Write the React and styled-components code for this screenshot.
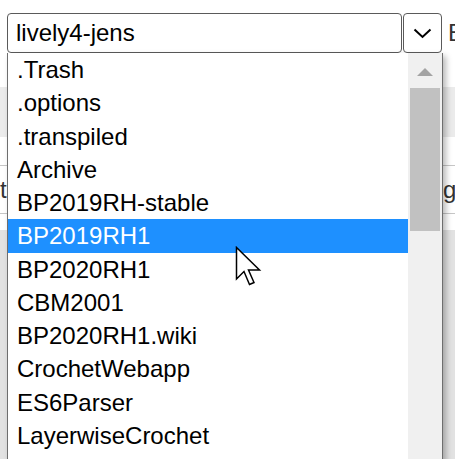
import React from "react";
import styled, { createGlobalStyle } from "styled-components";

const GlobalStyle = createGlobalStyle`
    html, body {
        margin: 0;
        padding: 0;
        background: #ffffff;
        font-family: "Liberation Sans", Arial, sans-serif;
    }
`;

const Page = styled.div`
    position: relative;
    width: 455px;
    height: 459px;
    overflow: hidden;
    display: flex;
    flex-direction: column;
    background: #ffffff;
`;

const TopBar = styled.div`
    display: flex;
    align-items: center;
    gap: 1px;
    padding: 13px 0 0 7px;
    white-space: nowrap;
`;

const SelectBox = styled.div`
    box-sizing: border-box;
    width: 395px;
    height: 40px;
    flex-shrink: 0;
    border: 1.5px solid #5a5a5a;
    border-radius: 4px;
    padding-left: 8px;
    font-size: 24px;
    line-height: 37px;
    color: #000;
`;

const SelectButton = styled.div`
    box-sizing: border-box;
    width: 39px;
    height: 40px;
    border: 1.5px solid #5a5a5a;
    border-radius: 4px;
    display: flex;
    align-items: center;
    justify-content: center;
    flex-shrink: 0;
`;

const SideLabel = styled.span`
    margin-left: 5px;
    font-size: 24px;
    color: #333;
    flex-shrink: 0;
`;

const Band = styled.div`
    margin-top: 34px;
    height: 50px;
    background: #ebebeb;
`;

const Blank = styled.div`
    height: ${(p) => p.$h}px;
    background: #ffffff;
`;

const ToolRow = styled.div`
    height: 47px;
    border-top: 1px solid #c6c6c6;
    border-bottom: 1px solid #c6c6c6;
    display: flex;
    align-items: center;
    white-space: nowrap;
    font-size: 24px;
    color: #333;
`;

const RowLabel = styled.span`
    margin-left: ${(p) => p.$offset}px;
    flex-shrink: 0;
`;

const GrayArea = styled.div`
    flex: 1;
    background: #e2e2e2;
`;

const Popup = styled.div`
    position: absolute;
    left: 7px;
    top: 53px;
    width: 436px;
    height: 420px;
    box-sizing: border-box;
    border-left: 1px solid #6e6e6e;
    border-right: 1px solid #6e6e6e;
    background: #ffffff;
    box-shadow: 3px 3px 6px rgba(0, 0, 0, 0.28);
    display: flex;
`;

const List = styled.div`
    flex: 1;
    display: flex;
    flex-direction: column;
`;

const Item = styled.div`
    height: 33.27px;
    line-height: 33.27px;
    padding-left: 9px;
    font-size: 24px;
    white-space: nowrap;
    color: ${(p) => (p.$selected ? "#ffffff" : "#000000")};
    background: ${(p) => (p.$selected ? "#1e90ff" : "transparent")};
`;

const Scrollbar = styled.div`
    width: 34px;
    background: #f0f0f0;
    display: flex;
    flex-direction: column;
    align-items: center;
`;

const ArrowCell = styled.div`
    height: 35px;
    width: 100%;
    display: flex;
    align-items: center;
    justify-content: center;
`;

const UpArrow = styled.div`
    width: 0;
    height: 0;
    border-left: 8px solid transparent;
    border-right: 8px solid transparent;
    border-bottom: 8px solid #a3a3a3;
    margin-top: 3px;
`;

const Thumb = styled.div`
    width: 30px;
    height: 143px;
    margin-left: 2px;
    align-self: flex-start;
    background: #c1c1c1;
`;

const Cursor = styled.svg`
    position: absolute;
    left: 235px;
    top: 246px;
`;

const folders = [
    ".Trash",
    ".options",
    ".transpiled",
    "Archive",
    "BP2019RH-stable",
    "BP2019RH1",
    "BP2020RH1",
    "CBM2001",
    "BP2020RH1.wiki",
    "CrochetWebapp",
    "ES6Parser",
    "LayerwiseCrochet",
];

export default function App() {
    return (
        <>
            <GlobalStyle />
            <Page>
                <TopBar>
                    <SelectBox>lively4-jens</SelectBox>
                    <SelectButton>
                        <svg width="19" height="11" viewBox="0 0 19 11">
                            <path d="M1.5 1.5 L9.5 9 L17.5 1.5" fill="none" stroke="#000" strokeWidth="2" />
                        </svg>
                    </SelectButton>
                    <SideLabel>Explore</SideLabel>
                </TopBar>
                <Band />
                <Blank $h={28} />
                <ToolRow>
                    <RowLabel $offset={-76}>Commit</RowLabel>
                    <RowLabel $offset={399}>Program</RowLabel>
                </ToolRow>
                <Blank $h={16} />
                <GrayArea />

                <Popup>
                    <List>
                        {folders.map((name) => (
                            <Item key={name} $selected={name === "BP2019RH1"}>
                                {name}
                            </Item>
                        ))}
                    </List>
                    <Scrollbar>
                        <ArrowCell>
                            <UpArrow />
                        </ArrowCell>
                        <Thumb />
                    </Scrollbar>
                </Popup>

                <Cursor width="28" height="42" viewBox="0 0 28 42">
                    <path
                        d="M1.5 1.5 L1.5 33 L9 25.5 L14.5 38.5 L19 36.5 L13.5 24 L24.5 24 Z"
                        fill="#ffffff"
                        stroke="#000000"
                        strokeWidth="1.5"
                        strokeLinejoin="miter"
                    />
                </Cursor>
            </Page>
        </>
    );
}
